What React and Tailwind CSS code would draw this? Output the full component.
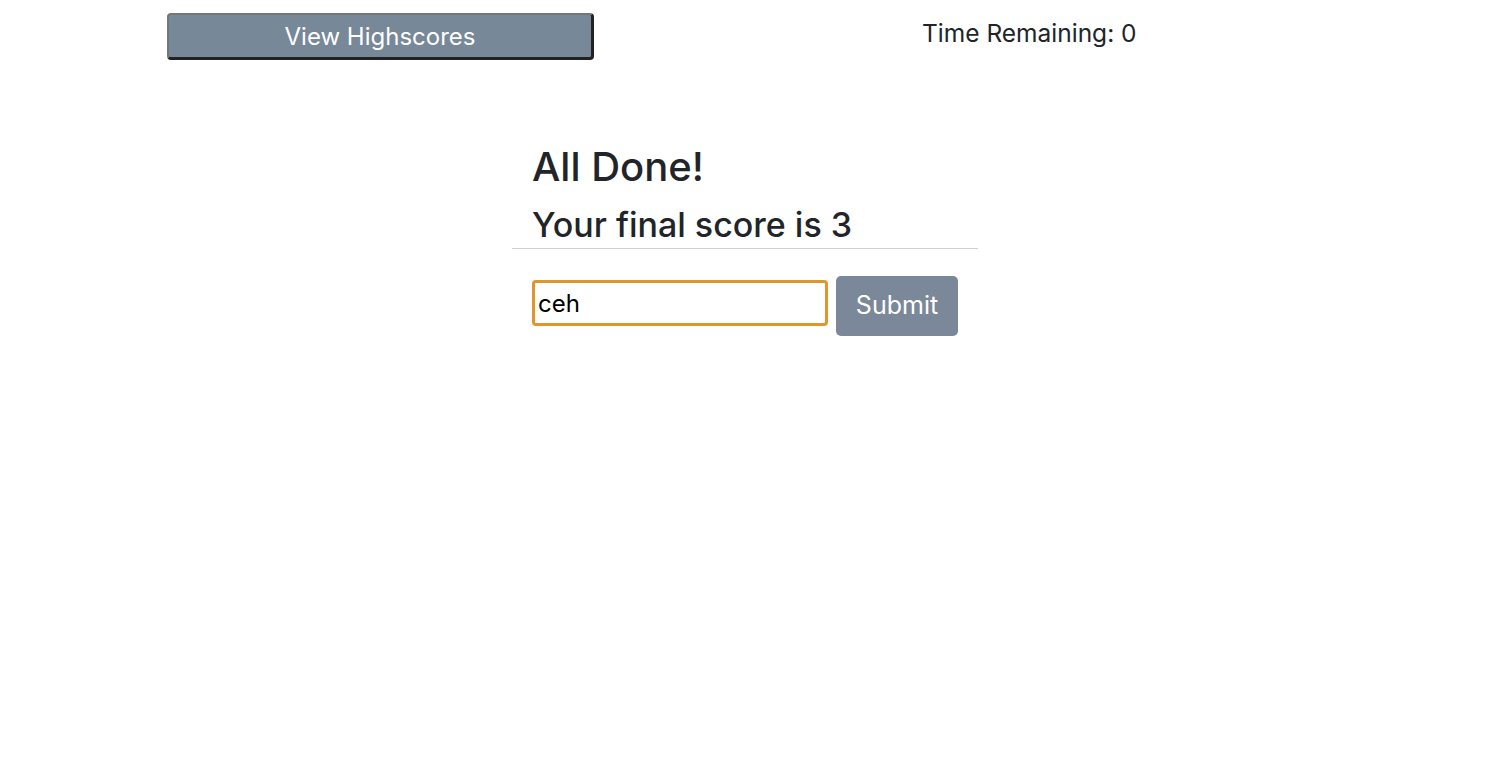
import React, { useState } from "react";

export default function App() {
  const [initials, setInitials] = useState("ceh");

  return (
    <div className="min-h-screen bg-white text-[#212529] font-['Inter','Noto_Sans',sans-serif]">
      {/* Header */}
      <div className="flex items-start pt-[13px]">
        <button className="ml-[167px] w-[427px] h-[47px] pt-[2px] bg-[#778899] text-white text-[24px] leading-none rounded-[4px] border-2 border-b-[3px] border-r-[3px] border-t-[#767676] border-l-[#767676] border-b-[#222222] border-r-[#222222]">
          View Highscores
        </button>
        <div className="ml-[328px] mt-[6px] text-[24.5px] leading-[28px]">Time Remaining: 0</div>
      </div>

      {/* Final score */}
      <div className="mx-auto w-[466px] mt-[83px]">
        <div className="px-5">
          <h1 className="text-[40px] font-medium leading-[48px]">All Done!</h1>
          <h2 className="mt-[15px] text-[34px] font-medium leading-[38px]">Your final score is 3</h2>
        </div>
        <hr className="mt-[4px] border-t border-[#d0d0d0]" />
        <div className="flex items-start gap-2 px-5 mt-[27px]">
          <input
            value={initials}
            onChange={(e) => setInitials(e.target.value)}
            className="mt-[4px] w-[296px] h-[46px] border-[3px] border-[#e0952e] rounded-[4px] px-[3px] text-[24px] text-black outline-none"
          />
          <button className="w-[123px] h-[60px] bg-[#7a8899] text-white text-[25px] rounded-[5px]">Submit</button>
        </div>
      </div>
    </div>
  );
}
